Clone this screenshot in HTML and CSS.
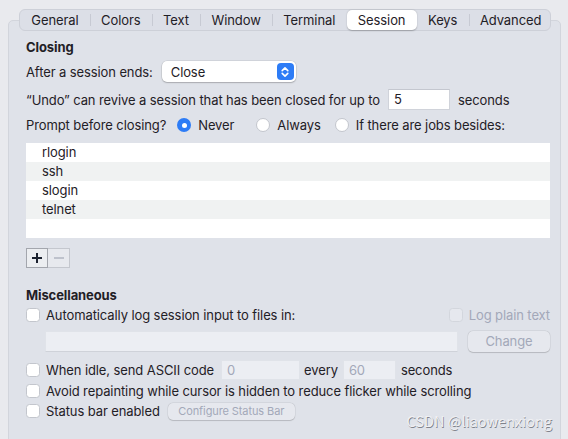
FILE: index.html
```html
<!DOCTYPE html>
<html>
<head>
<meta charset="utf-8">
<link rel="stylesheet" href="styles.css">
</head>
<body>
<div class="window">
  <div class="tabbar">
    <div class="tab">General</div>
    <div class="tab sep">Colors</div>
    <div class="tab sep">Text</div>
    <div class="tab sep">Window</div>
    <div class="tab sep">Terminal</div>
    <div class="tab selected">Session</div>
    <div class="tab">Keys</div>
    <div class="tab sep">Advanced</div>
  </div>
  <div class="panel">
    <div class="heading h-closing">Closing</div>
    <div class="row r-after">
      <span class="label">After a session ends:</span>
      <div class="popup"><span>Close</span>
        <span class="stepper"><svg width="10" height="12" viewBox="0 0 10 12"><path d="M2.2 4.6 L5 1.9 L7.8 4.6 M2.2 7.4 L5 10.1 L7.8 7.4" fill="none" stroke="#fff" stroke-width="1.6" stroke-linecap="round" stroke-linejoin="round"/></svg></span>
      </div>
    </div>
    <div class="row r-undo">
      <span class="label">“Undo” can revive a session that has been closed for up to</span>
      <div class="field f-undo">5</div>
      <span class="label">seconds</span>
    </div>
    <div class="row r-prompt">
      <span class="label">Prompt before closing?</span>
      <span class="radio on r-first"></span><span class="label rl">Never</span>
      <span class="radio r-next"></span><span class="label rl">Always</span>
      <span class="radio r-next2"></span><span class="label rl">If there are jobs besides:</span>
    </div>
    <div class="list">
      <div class="item">rlogin</div>
      <div class="item alt">ssh</div>
      <div class="item">slogin</div>
      <div class="item alt">telnet</div>
      <div class="item"></div>
    </div>
    <div class="pm">
      <div class="seg plus"><svg width="12" height="12" viewBox="0 0 12 12"><path d="M6 1 V11 M1 6 H11" stroke="#1c2230" stroke-width="2"/></svg></div>
      <div class="seg minus"><svg width="12" height="12" viewBox="0 0 12 12"><path d="M1 6 H11" stroke="#b4b8c4" stroke-width="1.6"/></svg></div>
    </div>
    <div class="heading h-misc">Miscellaneous</div>
    <div class="row r-auto">
      <div class="cbrow">
        <span class="check"></span><span class="label">Automatically log session input to files in:</span>
      </div>
      <div class="cbrow">
        <span class="check dis"></span><span class="label disabled">Log plain text</span>
      </div>
    </div>
    <div class="row r-path">
      <div class="field f-path"></div>
      <div class="button b-change">Change</div>
    </div>
    <div class="row r-idle">
      <span class="check"></span><span class="label">When idle, send ASCII code</span>
      <div class="field f-code">0</div>
      <span class="label">every</span>
      <div class="field f-every">60</div>
      <span class="label">seconds</span>
    </div>
    <div class="row r-avoid">
      <span class="check"></span><span class="label">Avoid repainting while cursor is hidden to reduce flicker while scrolling</span>
    </div>
    <div class="row r-status">
      <span class="check"></span><span class="label">Status bar enabled</span>
      <div class="button b-status">Configure Status Bar</div>
    </div>
  </div>
  <div class="watermark">CSDN @liaowenxiong</div>
</div>
</body>
</html>
```

FILE: styles.css
```css
html, body {
  margin: 0;
  padding: 0;
}
body {
  background: #e9eaee;
  font-family: Inter, "Noto Sans", "Liberation Sans", sans-serif;
  font-size: 13px;
  letter-spacing: -0.1px;
  color: #1f2026;
  width: 568px;
  height: 439px;
  overflow: hidden;
}
.window {
  position: relative;
  width: 568px;
  height: 439px;
  padding-top: 9px;
  box-sizing: border-box;
}
.tabbar {
  position: relative;
  z-index: 2;
  margin-left: 19px;
  width: 532px;
  height: 22px;
  box-sizing: border-box;
  background: #dcdfe7;
  border: 1px solid #cdd0d8;
  border-radius: 6px;
  display: flex;
  align-items: center;
}
.tab {
  position: relative;
  height: 20px;
  line-height: 20px;
  padding: 0 11.3px;
  text-align: center;
  white-space: nowrap;
}
.tab.sep::before {
  content: "";
  position: absolute;
  left: 0;
  top: 4px;
  width: 1px;
  height: 12px;
  background: #c7cad3;
}
.tab.selected {
  background: #ffffff;
  border-radius: 5px;
  box-shadow: 0 0.5px 1.5px rgba(0,0,0,0.25);
}
.panel {
  margin-top: -11px;
  margin-left: 8px;
  width: 553px;
  height: 430px;
  box-sizing: border-box;
  background: #dfe2e9;
  border: 1px solid #d2d5dc;
  border-radius: 5px;
  padding: 0 10px 0 17px;
}
.heading {
  font-weight: 700;
  height: 16px;
  line-height: 16px;
}
.h-closing { margin-top: 18px; }
.h-misc { margin-top: 19px; }
.row {
  display: flex;
  align-items: center;
  white-space: nowrap;
}
.label {
  line-height: 16px;
}
.r-after { margin-top: 6px; height: 21px; }
.popup {
  margin-left: 9px;
  width: 134px;
  height: 21px;
  box-sizing: border-box;
  background: #fff;
  border-radius: 5px;
  box-shadow: 0 0 0 0.5px rgba(0,0,0,0.12), 0 1px 1.5px rgba(0,0,0,0.2);
  display: flex;
  align-items: center;
  justify-content: space-between;
  padding: 0 2px 0 9px;
}
.stepper {
  width: 17px;
  height: 17px;
  background: #2d7cf6;
  border-radius: 4px;
  display: flex;
  align-items: center;
  justify-content: center;
}
.r-undo { margin-top: 7px; height: 21px; }
.field {
  height: 21px;
  box-sizing: border-box;
  background: #fff;
  border: 1px solid #d0d3da;
  border-top-color: #c4c7cf;
  line-height: 19px;
  padding-left: 5px;
}
.f-undo { width: 62px; margin: 0 8px 0 8px; }
.r-prompt { margin-top: 6px; height: 18px; }
.radio {
  width: 14px;
  height: 14px;
  box-sizing: border-box;
  border-radius: 50%;
  background: #fff;
  border: 1px solid #c3c6cd;
  flex: none;
}
.radio.on {
  background: #2d7cf6;
  border: none;
  display: flex;
  align-items: center;
  justify-content: center;
}
.radio.on::after {
  content: "";
  width: 5px;
  height: 5px;
  border-radius: 50%;
  background: #fff;
}
.r-first { margin-left: 11px; }
.r-next { margin-left: 22px; }
.r-next2 { margin-left: 14px; }
.rl { margin-left: 7px; }
.list {
  margin-top: 9px;
  width: 524px;
  background: #fff;
}
.item {
  height: 19px;
  line-height: 19px;
  padding-left: 16px;
}
.item.alt { background: #f0f2f2; }
.pm {
  margin-top: 10px;
  display: flex;
  width: 44px;
  height: 20px;
}
.seg {
  width: 22px;
  height: 20px;
  box-sizing: border-box;
  display: flex;
  align-items: center;
  justify-content: center;
}
.plus {
  background: #eceef1;
  border: 1px solid #a3a6ad;
}
.minus {
  background: #e7e9ee;
  border: 1px solid #c4c7ce;
  border-left: none;
}
.r-auto {
  margin-top: 4px;
  height: 16px;
  justify-content: space-between;
}
.cbrow {
  display: flex;
  align-items: center;
}
.check {
  width: 14px;
  height: 14px;
  box-sizing: border-box;
  border-radius: 3.5px;
  background: #fff;
  border: 1px solid #c3c6cd;
  margin-right: 6px;
  flex: none;
}
.check.dis {
  background: #e6e8ee;
  border-color: #d3d6dd;
}
.disabled { color: #a3a8b9; }
.r-path {
  margin-top: 8px;
  height: 21px;
  padding-left: 19px;
  justify-content: space-between;
}
.f-path {
  width: 413px;
  background: #eceef3;
  border-color: #e0e3e9;
  border-bottom-color: #cfd2d9;
}
.button {
  box-sizing: border-box;
  background: #e6e8ee;
  border-radius: 5px;
  box-shadow: 0 0 0 0.5px rgba(0,0,0,0.08), 0 0.5px 1px rgba(0,0,0,0.15);
  color: #a3a8b9;
  text-align: center;
}
.b-change {
  width: 82px;
  height: 21px;
  line-height: 21px;
}
.r-idle { margin-top: 8px; height: 20px; }
.f-code {
  width: 79px;
  height: 20px;
  margin: 0 4px 0 7px;
  background: #eceef3;
  border-color: #e0e3e9;
  color: #a3a8b9;
}
.f-every {
  width: 53px;
  height: 20px;
  margin: 0 5px 0 5px;
  background: #eceef3;
  border-color: #e0e3e9;
  color: #a3a8b9;
}
.r-avoid { margin-top: 3px; height: 16px; }
.r-status { margin-top: 3px; height: 18px; }
.b-status {
  margin-left: 8px;
  width: 127px;
  height: 17px;
  line-height: 17px;
  font-size: 11px;
}
.watermark {
  position: absolute;
  right: 16px;
  top: 410px;
  font-family: "Noto Sans CJK SC", "Noto Sans", sans-serif;
  font-size: 14.5px;
  letter-spacing: 0;
  color: #eff0f3;
  text-shadow: 0.6px 0.6px 0.6px #7f838c;
}
```
